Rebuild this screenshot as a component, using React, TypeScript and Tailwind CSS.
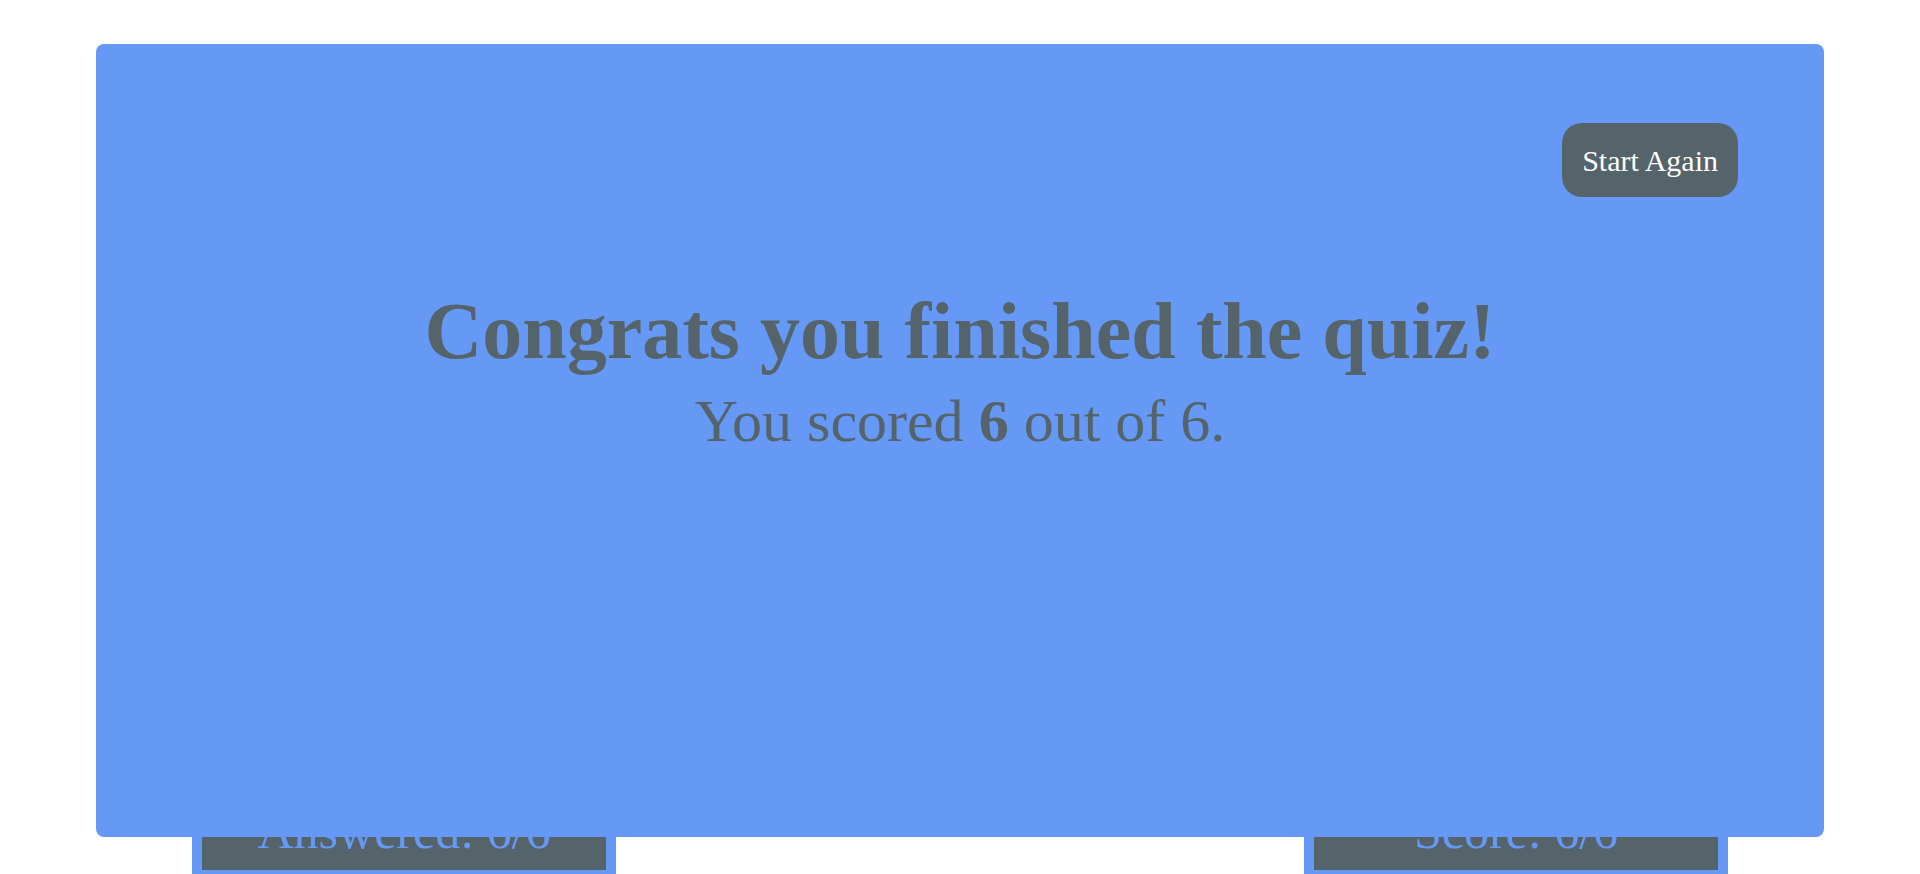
const serif = { fontFamily: '"Liberation Serif", "Times New Roman", serif' };

function StatBox({ label }: { label: string }) {
  return (
    <div className="w-[424px] border-[10px] border-[#6699f5] bg-[#55646a] px-4 pb-[11px] pt-[10px] text-center text-[50px] leading-[55px] text-[#6699f5]">
      {label}
    </div>
  );
}

export default function App() {
  return (
    <div className="relative h-[874px] overflow-hidden bg-white" style={serif}>
      {/* quiz page underneath */}
      <div className="flex justify-between px-[192px] pt-[784px]">
        <StatBox label="Answered: 6/6" />
        <StatBox label="Score: 6/6" />
      </div>

      {/* result overlay */}
      <div className="absolute left-[96px] top-[44px] flex h-[793px] w-[1728px] flex-col rounded-lg bg-[#6699f5] text-[#55646a]">
        <div className="flex justify-end pr-[86px] pt-[79px]">
          <button className="h-[74px] rounded-[20px] bg-[#55646a] px-[20px] text-[30px] text-white">
            Start Again
          </button>
        </div>
        <h1 className="mt-[94px] text-center text-[80px] font-bold leading-none">
          Congrats you finished the quiz!
        </h1>
        <p className="mt-[20px] text-center text-[60px] leading-none">
          You scored <b>6</b> out of 6.
        </p>
      </div>
    </div>
  );
}
